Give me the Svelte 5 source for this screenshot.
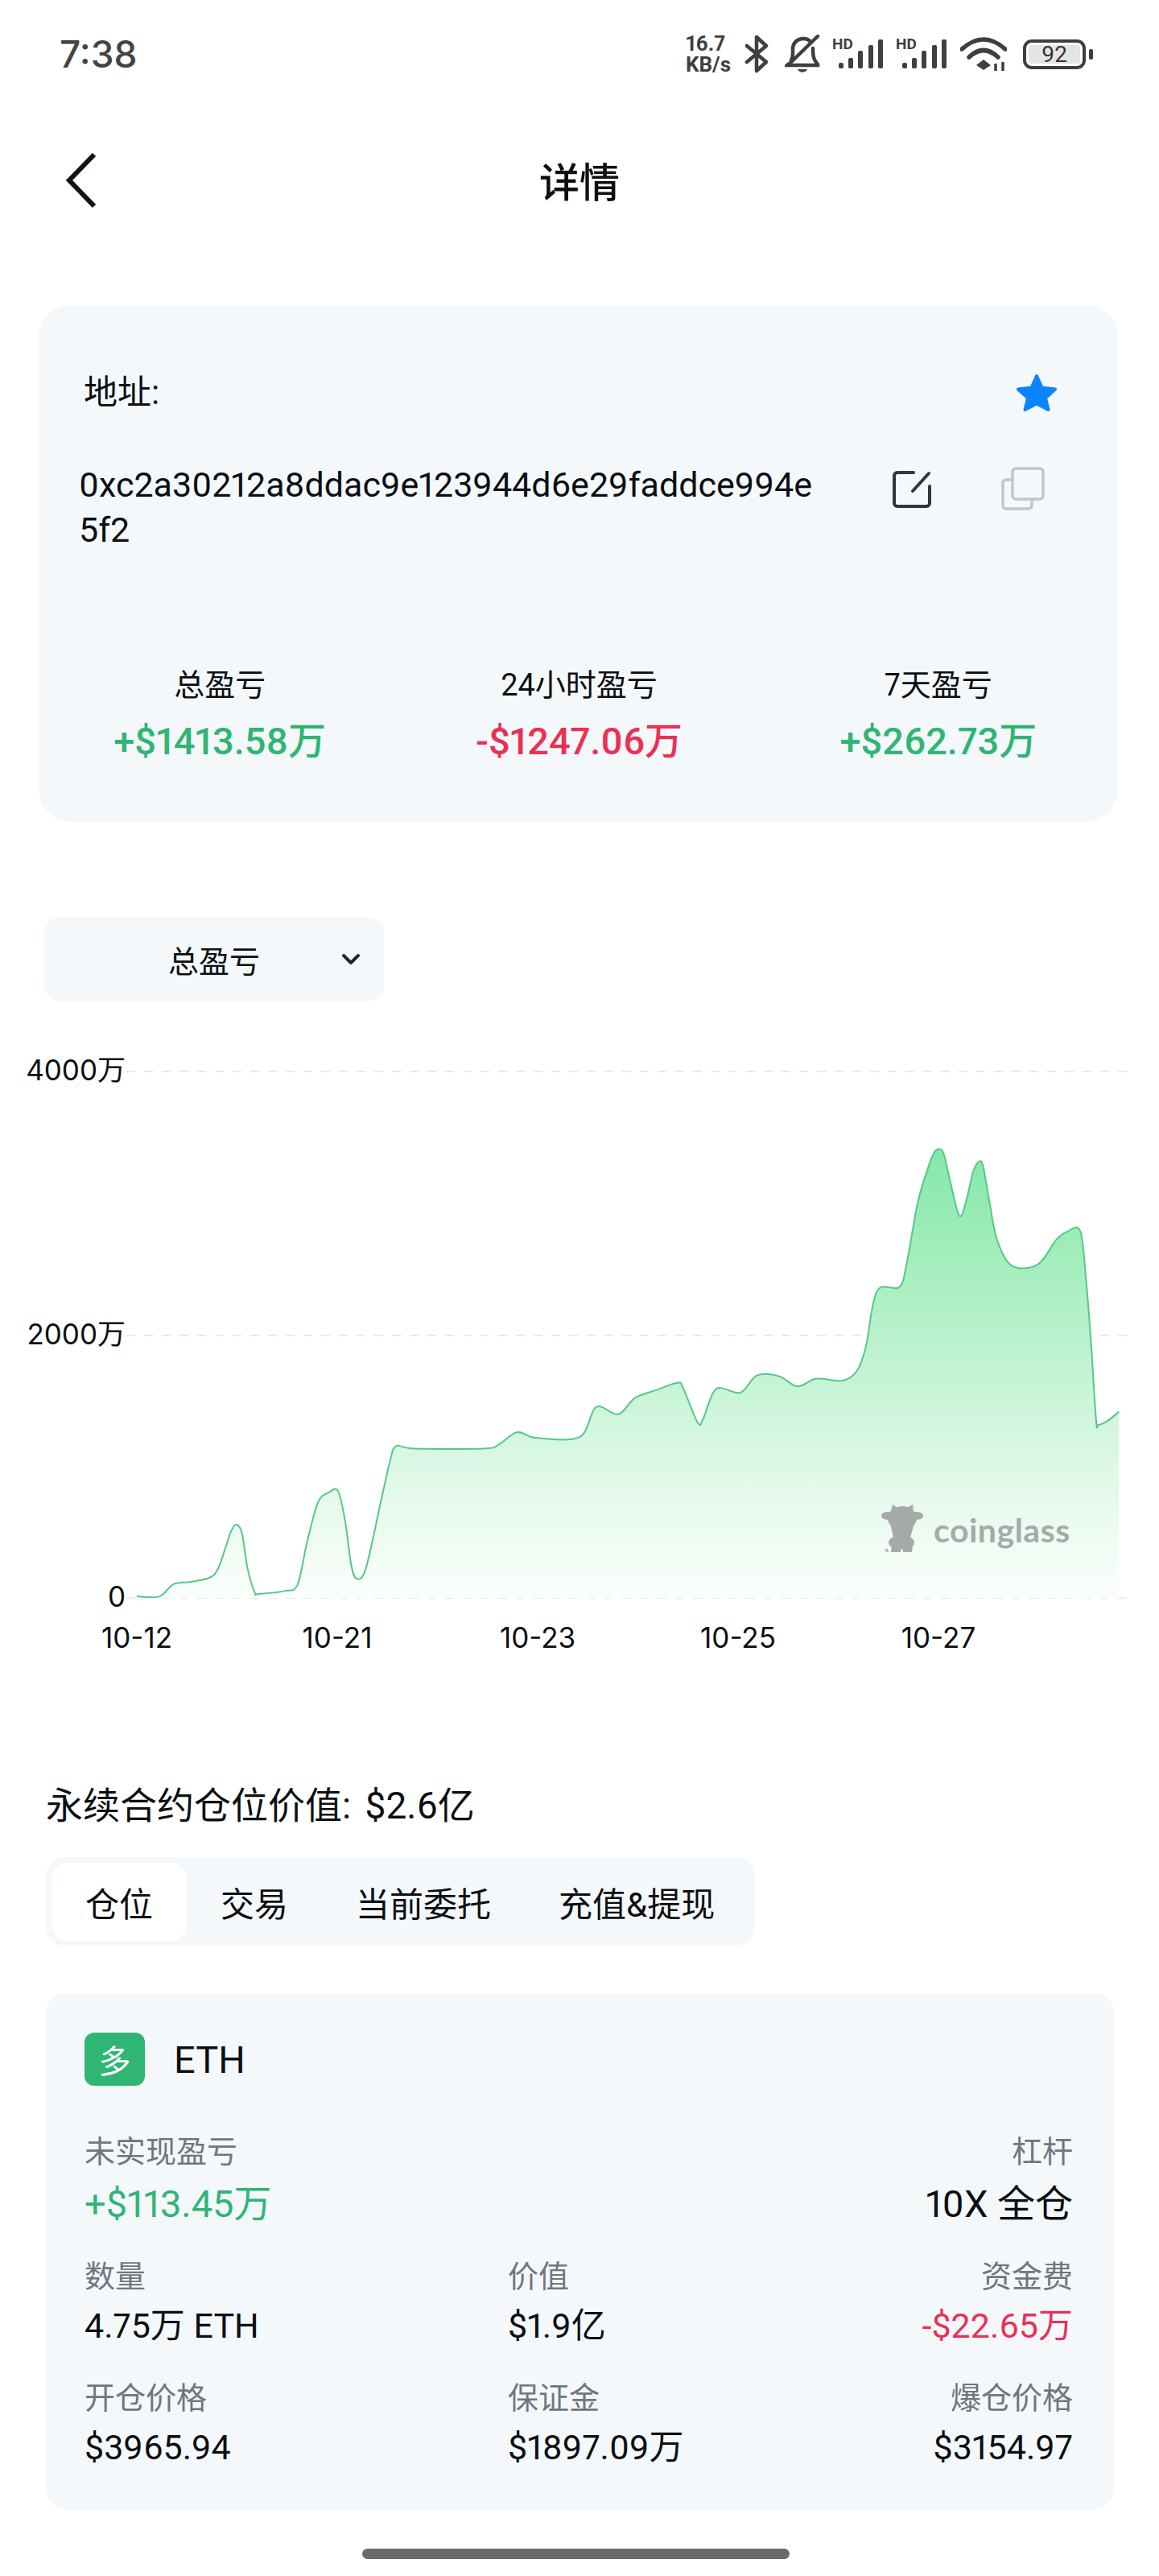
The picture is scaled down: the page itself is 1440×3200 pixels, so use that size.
<script lang="ts">
  // Line traced from the chart, left and right halves of the plot
  const leftHalf = [[370,1378],[432,1378],[470,1348],[520,1342],[580,1325],[610,1260],[625,1220],[640,1203],[655,1225],[670,1310],[690,1370],[700,1372],[770,1365],[805,1350],[830,1250],[860,1150],[890,1125],[915,1122],[935,1200],[950,1300],[965,1335],[990,1310],[1030,1150],[1055,1050],[1072,1012],[1120,1018],[1310,1018],[1350,1008],[1400,978],[1450,992]];
  const rightHalf = [[0,990],[45,917],[105,935],[150,895],[210,875],[265,858],[280,870],[320,955],[335,945],[370,873],[435,882],[480,840],[540,842],[590,867],[640,848],[710,853],[750,830],[775,770],[805,635],[865,625],[885,570],[915,420],[945,330],[960,297],[972,289],[985,298],[1000,355],[1027,450],[1045,420],[1065,345],[1080,320],[1092,330],[1110,420],[1130,510],[1170,573],[1240,570],[1290,510],[1320,490],[1355,488],[1370,600],[1385,770],[1398,950],[1405,960],[1430,950],[1460,928]];

  const points = [
    ...leftHalf.map(([x, y]) => [x / 2.178, y / 1.96]),
    ...rightHalf.map(([x, y]) => [720 + x / 2.178, y / 1.96])
  ];

  function smoothPath(pts: number[][]) {
    let d = `M${pts[0][0].toFixed(1)} ${pts[0][1].toFixed(1)}`;
    for (let i = 0; i < pts.length - 1; i++) {
      const p0 = pts[Math.max(i - 1, 0)];
      const p1 = pts[i];
      const p2 = pts[i + 1];
      const p3 = pts[Math.min(i + 2, pts.length - 1)];
      const c1x = p1[0] + (p2[0] - p0[0]) / 6;
      const c1y = p1[1] + (p2[1] - p0[1]) / 6;
      const c2x = p2[0] - (p3[0] - p1[0]) / 6;
      const c2y = p2[1] - (p3[1] - p1[1]) / 6;
      d += ` C${c1x.toFixed(1)} ${c1y.toFixed(1)} ${c2x.toFixed(1)} ${c2y.toFixed(1)} ${p2[0].toFixed(1)} ${p2[1].toFixed(1)}`;
    }
    return d;
  }

  const linePath = smoothPath(points);
  const areaPath = `${linePath} L1390 705 L170 705 Z`;

  const gridLines = [51, 379, 705];
  const yLabels = [
    { text: '4000万', y: 49 },
    { text: '2000万', y: 377 },
    { text: '0', y: 703 }
  ];
  const xLabels = [
    { text: '10-12', x: 170 },
    { text: '10-21', x: 419 },
    { text: '10-23', x: 668 },
    { text: '10-25', x: 917 },
    { text: '10-27', x: 1166 }
  ];

  const stats = [
    { label: '总盈亏', value: '+$1413.58万', tone: 'up' },
    { label: '24小时盈亏', value: '-$1247.06万', tone: 'down' },
    { label: '7天盈亏', value: '+$262.73万', tone: 'up' }
  ];

  const tabs = ['仓位', '交易', '当前委托', '充值&提现'];

  const fields = [
    { label: '未实现盈亏', value: '+$113.45万', tone: 'up', big: true },
    { label: '杠杆', value: '10X 全仓', big: true, col3: true },
    { label: '数量', value: '4.75万 ETH' },
    { label: '价值', value: '$1.9亿' },
    { label: '资金费', value: '-$22.65万', tone: 'down', col3: true },
    { label: '开仓价格', value: '$3965.94' },
    { label: '保证金', value: '$1897.09万' },
    { label: '爆仓价格', value: '$3154.97', col3: true }
  ];

  const signalBars = [
    { x: 8, top: 30 },
    { x: 20, top: 24 },
    { x: 32, top: 15 },
    { x: 45, top: 8 },
    { x: 57, top: 1 }
  ];
</script>

{#snippet signal()}
  <svg class="signal" width="64" height="48" viewBox="0 -5 64 48">
    <text x="0" y="13" class="hd">HD</text>
    {#each signalBars as bar}
      <rect x={bar.x} y={bar.top} width="6" height={37 - bar.top} rx="2" fill="#3f3f3f" />
    {/each}
  </svg>
{/snippet}

<div class="page">
  <div class="status">
    <span class="time">7:38</span>
    <div class="status-icons">
      <div class="speed"><span>16.7</span><span>KB/s</span></div>
      <svg class="bt" width="30" height="48" viewBox="0 0 30 48" fill="none" stroke="#3f3f3f" stroke-width="4.5" stroke-linejoin="round" stroke-linecap="round">
        <path d="M3 14 L27 34 L15 45 V3 L27 14 L3 34" />
      </svg>
      <svg class="bell" width="44" height="48" viewBox="0 0 44 48" fill="none" stroke="#3f3f3f" stroke-width="4.5" stroke-linecap="round">
        <path d="M8 32 C11 26 10 24 10 18 C10 10 16 5 23 5 C27 5 30 6 32 9" />
        <path d="M35 17 C35 28 36 31 41 37 L41 38 H3 L4 37" />
        <path d="M41 2 L6 36" />
        <path d="M16 43 H28 C26 48 18 48 16 43 Z" fill="#3f3f3f" stroke="none" />
      </svg>
      {@render signal()}
      {@render signal()}
      <svg class="wifi" width="58" height="44" viewBox="0 0 58 44" fill="none" stroke="#3f3f3f" stroke-width="5.5" stroke-linecap="round">
        <path d="M2 16 Q29 -8 56 16" />
        <path d="M11 26 Q29 9 47 26" />
        <path d="M20 36 L29 29 L38 36 L29 42 Z" fill="#3f3f3f" stroke="none" />
        <path d="M44 34 V43 M53 32 V43" stroke-width="3.5" stroke-linecap="butt" />
      </svg>
      <div class="battery-wrap">
        <div class="battery"><span>92</span></div>
        <i class="nub"></i>
      </div>
    </div>
  </div>

  <div class="nav">
    <svg class="back" width="46" height="70" viewBox="0 0 46 70" fill="none" stroke="#10141a" stroke-width="6">
      <path d="M39 3 L8 35 L39 67" />
    </svg>
    <h1>详情</h1>
  </div>

  <section class="summary">
    <div class="addr-head">
      <span>地址:</span>
      <svg width="54" height="50" viewBox="0 0 54 50">
        <path d="M27 4 L33.500 18.500 L50 20.500 L38 31.500 L41.500 46 L27 38.500 L12.500 46 L16 31.500 L4 20.500 L20.500 18.500 Z" fill="#0a84ff" stroke="#0a84ff" stroke-width="4" stroke-linejoin="round" />
      </svg>
    </div>
    <div class="addr-row">
      <div class="addr">0xc2a30212a8ddac9e123944d6e29faddce994e5f2</div>
      <svg class="edit" width="50" height="48" viewBox="0 0 50 48" fill="none" stroke="#33373b" stroke-width="4" stroke-linecap="round">
        <path d="M27 3 H7 A4 4 0 0 0 3 7 V41 A4 4 0 0 0 7 45 H43 A4 4 0 0 0 47 41 V20" />
        <path d="M46 4 L26 26" />
      </svg>
      <svg class="copy" width="54" height="54" viewBox="0 0 54 54" fill="none" stroke="#c2c6ca" stroke-width="3.5">
        <rect x="14" y="2" width="38" height="38" rx="4" />
        <path d="M14 16 H6 A4 4 0 0 0 2 20 V48 A4 4 0 0 0 6 52 H34 A4 4 0 0 0 38 48 V40" />
      </svg>
    </div>
    <div class="stats">
      {#each stats as stat}
        <div class="stat">
          <div class="stat-label">{stat.label}</div>
          <div class="stat-value {stat.tone}">{stat.value}</div>
        </div>
      {/each}
    </div>
  </section>

  <div class="select">
    <span>总盈亏</span>
    <svg width="26" height="16" viewBox="0 0 26 16" fill="none" stroke="#22262a" stroke-width="4" stroke-linecap="round" stroke-linejoin="round">
      <path d="M4 3 L13 12 L22 3" />
    </svg>
  </div>

  <svg class="chart" width="1440" height="790" viewBox="0 0 1440 790">
    <defs>
      <linearGradient id="areaFill" gradientUnits="userSpaceOnUse" x1="0" y1="148" x2="0" y2="705">
        <stop offset="0" stop-color="#85e8a8" />
        <stop offset="0.45" stop-color="#bdf2cf" />
        <stop offset="0.75" stop-color="#e3f9ea" />
        <stop offset="1" stop-color="#fbfefc" />
      </linearGradient>
    </defs>
    {#each gridLines as y}
      <line x1="157" x2="1402" y1={y} y2={y} stroke="#e8eaec" stroke-width="2" stroke-dasharray="11 11" />
    {/each}
    <path d={areaPath} fill="url(#areaFill)" />
    <path d={linePath} fill="none" stroke="#55c985" stroke-width="2" />
    {#each yLabels as label}
      <text class="axis" x="156" y={label.y} text-anchor="end" dominant-baseline="central">{label.text}</text>
    {/each}
    {#each xLabels as label}
      <text class="axis" x={label.x} y="754" text-anchor="middle" dominant-baseline="central">{label.text}</text>
    {/each}
    <g fill="#a6a9aa">
      <ellipse cx="1121" cy="606" rx="18" ry="15" />
      <ellipse cx="1103" cy="603" rx="8" ry="5" />
      <ellipse cx="1139" cy="603" rx="8" ry="5" />
      <path d="M1107 596 L1109 589 L1115 593 Z M1127 593 L1134 589 L1135 596 Z" />
      <path d="M1106 612 L1136 612 L1131 630 L1110 630 Z" />
      <ellipse cx="1120" cy="636" rx="16" ry="9" />
      <path d="M1108 640 H1119 V648 H1107 Z M1122 640 H1134 L1133 648 H1122 Z" />
      <path d="M1104 648 L1100 646 L1103 644" fill="none" stroke="#a6a9aa" stroke-width="1.500" />
      <text class="mark" x="1160" y="620" dominant-baseline="central">coinglass</text>
    </g>
  </svg>

  <h2>永续合约仓位价值: $2.6亿</h2>

  <div class="tabs">
    {#each tabs as tab, i}
      <div class="tab" class:active={i === 0}>{tab}</div>
    {/each}
  </div>

  <section class="position">
    <div class="pos-head">
      <span class="badge">多</span>
      <span class="symbol">ETH</span>
    </div>
    <div class="fields">
      {#each fields as field}
        <div class="field" class:col3={field.col3} class:big={field.big}>
          <div class="field-label">{field.label}</div>
          <div class="field-value {field.tone ?? ''}">{field.value}</div>
        </div>
      {/each}
    </div>
  </section>

  <div class="home-bar"></div>
</div>

<style>
  :global(body) {
    margin: 0;
    background: #fff;
  }

  .page {
    width: 1440px;
    min-height: 3200px;
    color: #0c0f12;
    font-family: Roboto, "Noto Sans CJK SC", sans-serif;
    font-variant-numeric: proportional-nums;
  }

  .status {
    height: 134px;
    display: flex;
    align-items: center;
    justify-content: space-between;
    padding: 0 82px 0 74px;
  }

  .time {
    font-family: Inter, sans-serif;
    font-size: 46px;
    color: #444;
    font-weight: 500;
  }

  .status-icons {
    display: flex;
    align-items: center;
    gap: 15px;
  }

  .speed {
    display: flex;
    flex-direction: column;
    font-family: Roboto, sans-serif;
    font-weight: 700;
    font-size: 26px;
    line-height: 26px;
    color: #3f3f3f;
    width: 61px;
  }

  .bt {
    margin-left: -3px;
  }

  .bell {
    margin-left: 5px;
  }

  .wifi {
    margin-left: 1px;
  }

  .hd {
    font-family: Roboto, sans-serif;
    font-weight: 700;
    font-size: 19px;
    fill: #3f3f3f;
  }

  .battery-wrap {
    display: flex;
    align-items: center;
    gap: 4px;
    margin-left: 5px;
  }

  .battery {
    width: 78px;
    height: 37px;
    box-sizing: border-box;
    border: 4px solid #3f3f3f;
    border-radius: 11px;
    padding: 3px;
    display: flex;
  }

  .battery span {
    flex: 1;
    background: #e4e4e4;
    border-radius: 3px;
    text-align: center;
    font-size: 28px;
    line-height: 23px;
    color: #333;
  }

  .nub {
    width: 5px;
    height: 13px;
    background: #3f3f3f;
    border-radius: 2px;
  }

  .nav {
    height: 180px;
    box-sizing: border-box;
    padding-bottom: 3px;
    position: relative;
    display: flex;
    align-items: center;
    justify-content: center;
  }

  .back {
    position: absolute;
    left: 78px;
    top: 55px;
  }

  h1 {
    margin: 0;
    font-size: 50px;
    font-weight: 500;
  }

  .summary {
    margin: 65px 51px 0 48px;
    padding: 84px 0 70px;
    background: #f4f8fb;
    border-radius: 40px;
  }

  .addr-head {
    display: flex;
    align-items: center;
    justify-content: space-between;
    padding: 0 74px 0 56px;
    font-size: 42px;
    line-height: 48px;
  }

  .addr-row {
    display: flex;
    align-items: flex-start;
    margin-top: 61px;
    padding-left: 50px;
  }

  .addr {
    width: 925px;
    font-size: 43px;
    line-height: 56px;
    word-break: break-all;
  }

  .edit {
    margin: 10px 0 0 85px;
  }

  .copy {
    margin: 6px 0 0 86px;
  }

  .stats {
    display: grid;
    grid-template-columns: repeat(3, 1fr);
    margin-top: 140px;
    padding-left: 2px;
    text-align: center;
  }

  .stat-label {
    font-size: 38px;
    line-height: 50px;
  }

  .stat-value {
    margin-top: 15px;
    font-size: 47px;
    line-height: 60px;
    font-weight: 500;
  }

  .up {
    color: #2fb574;
  }

  .down {
    color: #ec2f54;
  }

  .select {
    margin: 118px 0 0 55px;
    width: 422px;
    height: 105px;
    box-sizing: border-box;
    padding: 0 28px 0 154px;
    background: #f4f8fb;
    border-radius: 20px;
    display: flex;
    align-items: center;
    justify-content: space-between;
    font-size: 38px;
  }

  .chart {
    display: block;
    margin-top: 36px;
  }

  .axis {
    font-family: Inter, "Noto Sans CJK SC", sans-serif;
    font-size: 35px;
    fill: #0c0f12;
  }

  .mark {
    font-family: Lato, sans-serif;
    font-weight: 700;
    font-size: 41px;
    letter-spacing: 0.5px;
  }

  h2 {
    margin: 143px 0 0 57px;
    font-size: 46px;
    line-height: 60px;
    font-weight: 400;
    word-spacing: 6px;
  }

  .tabs {
    margin: 34px 0 0 57px;
    width: 881px;
    height: 110px;
    box-sizing: border-box;
    padding: 7px;
    background: #f4f8fb;
    border-radius: 24px;
    display: flex;
  }

  .tab {
    height: 97px;
    padding: 0 42px;
    display: flex;
    align-items: center;
    font-size: 42px;
    border-radius: 20px;
  }

  .tab.active {
    background: #fff;
  }

  .position {
    margin: 59px 56px 0 57px;
    height: 641px;
    box-sizing: border-box;
    padding: 49px 51px 0 48px;
    background: #f4f8fb;
    border-radius: 24px;
  }

  .pos-head {
    display: flex;
    align-items: center;
    gap: 36px;
  }

  .badge {
    width: 75px;
    height: 66px;
    background: #2fb574;
    border-radius: 12px;
    color: #fff;
    font-size: 40px;
    display: flex;
    align-items: center;
    justify-content: center;
  }

  .symbol {
    font-size: 47px;
  }

  .fields {
    display: grid;
    grid-template-columns: 526px 1fr 1fr;
    row-gap: 37px;
    margin-top: 57px;
  }

  .field.col3 {
    grid-column: 3;
    text-align: right;
  }

  .field-label {
    font-size: 38px;
    line-height: 50px;
    color: #70777d;
  }

  .field-value {
    margin-top: 8px;
    font-size: 43px;
    line-height: 56px;
  }

  .big .field-value {
    margin-top: 12px;
    font-size: 47px;
  }

  .home-bar {
    width: 531px;
    height: 13px;
    margin: 49px 0 0 450px;
    background: #6b6b6b;
    border-radius: 7px;
  }
</style>
